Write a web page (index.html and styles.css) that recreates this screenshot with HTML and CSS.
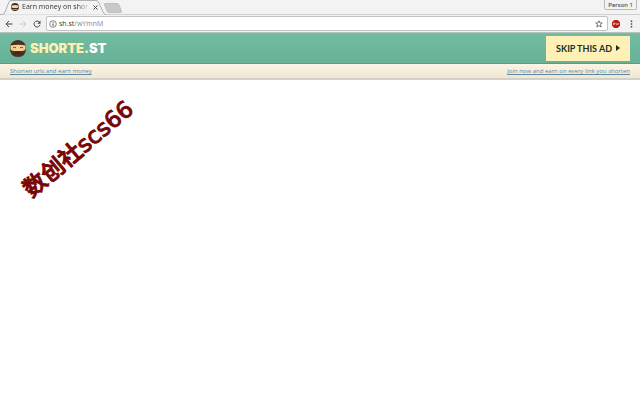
FILE: index.html
```html
<!DOCTYPE html>
<html lang="en">
<head>
<meta charset="utf-8">
<title>Earn money on short links</title>
<link rel="stylesheet" href="styles.css">
</head>
<body>
<header class="browser">
  <div class="tabs">
    <svg class="frames" width="130" height="15" viewBox="0 0 130 15" aria-hidden="true">
      <path d="M0 14.500H2Q4 14.500 5 12L9 2Q9.600 .5 11 .5H96Q98 .5 98.600 2L103 12Q104 14.500 106 14.500" fill="#f3f3f3" stroke="#b0b0b0"/>
      <path d="M105 3.500H117Q118.500 3.500 119 5L121.500 11Q122 12.500 120.500 12.500H109Q107.500 12.500 107 11L104.500 5Q104 3.500 105 3.500Z" fill="#c9c9c9" stroke="#c0c0c0"/>
    </svg>
    <div class="tab">
      <svg width="8" height="8" viewBox="0 0 16 16" aria-hidden="true"><circle cx="8" cy="8" r="8" fill="#422b20"/><path d="M1 5Q8 3 15 5V9Q8 11 1 9Z" fill="#f7d49a"/><path d="M3 13H13" stroke="#b89055" stroke-width="2"/></svg>
      <span class="tab-title">Earn money on shor</span>
      <button class="close" aria-label="Close tab"><svg width="5" height="5" viewBox="0 0 5 5"><path d="M.5 .5L4.500 4.500M4.500 .5L.5 4.500" stroke="#444"/></svg></button>
    </div>
    <button class="person">Person 1</button>
  </div>
  <div class="toolbar">
    <button aria-label="Back"><svg width="8" height="8" viewBox="0 0 8 8"><path d="M7.500 4H1M4 1L1 4L4 7" fill="none" stroke="#444"/></svg></button>
    <button aria-label="Forward"><svg width="8" height="8" viewBox="0 0 8 8"><path d="M.5 4H7M4 1L7 4L4 7" fill="none" stroke="#ccc"/></svg></button>
    <button aria-label="Reload"><svg width="8" height="8" viewBox="0 0 8 8"><path d="M6.300 2A3 3 0 1 0 7 4.800" fill="none" stroke="#444"/><path d="M7.500 .5V3.700H4.300Z" fill="#444"/></svg></button>
    <div class="address">
      <svg width="8" height="8" viewBox="0 0 8 8" aria-hidden="true"><circle cx="4" cy="4" r="3.300" fill="none" stroke="#666" stroke-width=".8"/><path d="M4 3.500V6M4 2V2.900" stroke="#555"/></svg>
      <span class="url">sh.st<span class="path">/wYmnM</span></span>
      <button aria-label="Bookmark"><svg width="8" height="8" viewBox="0 0 8 8"><path d="M4 .8L5 3H7.300L5.500 4.500L6.200 7L4 5.600L1.800 7L2.500 4.500L.7 3H3Z" fill="none" stroke="#555" stroke-width=".8"/></svg></button>
    </div>
    <button aria-label="Extension"><svg width="8" height="8" viewBox="0 0 8 8"><path d="M2.300 0H5.700L8 2.300V5.700L5.700 8H2.300L0 5.700V2.300Z" fill="#b51d16"/><path d="M1.500 5.200V3H3V4.200H1.500M4 3.200L4.600 4.800L5.200 3.500L5.800 4.800L6.600 3" fill="none" stroke="#f5cfc5" stroke-width=".7"/></svg></button>
    <button class="menu" aria-label="Menu"><svg width="3" height="8" viewBox="0 0 3 8"><path d="M1.500 .5V2M1.500 3.300V4.800M1.500 6.100V7.600" stroke="#444" stroke-width="1.500"/></svg></button>
  </div>
</header>
<div class="site">
  <a class="brand" href="#">
    <svg width="16" height="17" viewBox="0 0 16 17" aria-hidden="true"><path d="M8 0Q11 0 13 1.800Q16 4 16 8.500Q16 17 8 17Q0 17 0 8.500Q0 4 3 1.800Q5 0 8 0Z" fill="#4c3025"/><path d="M.5 5.500Q8 4 15.500 5.500V9Q15 11 12 11H4Q1 11 .5 9Z" fill="#f6d390"/><path d="M3 7.800Q4.500 6.600 6 7.800M10 7.800Q11.500 6.600 13 7.800" fill="none" stroke="#6b442c"/><path d="M5 13.500Q8 12 11 13.500" fill="none" stroke="#2f1d18"/></svg>
    <span class="name">SHORTE.<span class="suffix">ST</span></span>
  </a>
  <button class="skip">SKIP THIS AD <svg width="4" height="6" viewBox="0 0 4 6" aria-hidden="true"><path d="M0 0L4 3L0 6Z" fill="#173324"/></svg></button>
</div>
<nav class="links">
  <a href="#">Shorten urls and earn money</a>
  <a href="#">Join now and earn on every link you shorten</a>
</nav>
<main class="page">
  <p class="watermark"><span class="han" lang="zh">数创社</span>scs66</p>
</main>
</body>
</html>
```
FILE: styles.css
```css
* { box-sizing: border-box; }
body { margin: 0; background: #fff; font-family: "Open Sans", sans-serif; overflow: hidden; }
button { display: flex; align-items: center; justify-content: center; padding: 0; border: 0; background: none; }
svg { flex: none; display: block; }
.browser { background: #f2f2f2; border-bottom: 1px solid #b8c4be; }
.tabs { position: relative; display: flex; justify-content: space-between; height: 15px; background: #f3f3f3; border-bottom: 1px solid #d0d0d0; }
.frames { position: absolute; left: 0; top: 0; }
.tab { position: relative; display: flex; align-items: center; width: 98px; padding-left: 11px; gap: 3px; }
.tab-title { flex: 1; white-space: nowrap; font-size: 7px; line-height: 12px; color: #333; mask-image: linear-gradient(to right, #000 82%, transparent); }
.person { height: 10px; margin-right: 3px; padding: 0 3px; border: 1px solid #bbb; border-top: 0; border-radius: 0 0 2px 2px; font-family: "Noto Sans", sans-serif; font-size: 6px; color: #555; text-shadow: 0 0 1px #aaa; }
.toolbar { display: flex; align-items: center; gap: 6px; height: 17px; padding: 0 7px 0 5px; }
.address { flex: 1; display: flex; align-items: center; gap: 2px; height: 15px; margin: 0 -2px 0 -1px; padding: 0 4px 0 2px; background: #fff; border: 1px solid #c2c2c2; border-radius: 2px; }
.toolbar > .menu { margin-left: 4px; }
.url { flex: 1; font-size: 7px; line-height: 12px; color: #333; }
.path { color: #888; }
.site { display: flex; align-items: center; justify-content: space-between; height: 31px; padding: 0 10px; background: linear-gradient(#72bda2, #67b196); border-bottom: 1px solid #559f87; }
.brand { display: flex; align-items: center; gap: 4px; text-decoration: none; }
.name { font-family: Inter, sans-serif; font-weight: 900; font-size: 13px; line-height: 16px; color: #fff0b0; }
.suffix { color: #fff; }
.skip { gap: 4px; height: 25px; padding: 0 10px; background: #fff0b5; font-family: Lato, sans-serif; font-weight: 700; font-size: 9px; color: #173324; }
.links { display: flex; align-items: center; justify-content: space-between; height: 16px; padding: 0 10px; background: linear-gradient(#faf5e6, #f0e7d2); border-bottom: 2px solid #d3d0c6; }
.links a { font-family: "Open Sans", sans-serif; font-size: 6px; line-height: 10px; color: #5d86a0; }
.page { padding: 54px 10px; }
.watermark { width: max-content; margin: 0; color: #780606; font-family: "DejaVu Sans", sans-serif; font-size: 23px; line-height: 26px; -webkit-text-stroke: 1px; transform: rotate(-40deg); }
.han { font-family: "Noto Sans CJK SC", sans-serif; font-weight: 500; }
```
